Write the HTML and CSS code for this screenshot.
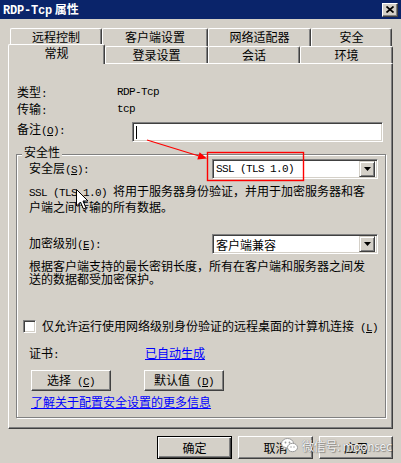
FILE: index.html
```html
<!DOCTYPE html>
<html lang="zh-CN">
<head>
    <meta charset="UTF-8">
    <title>RDP-Tcp 属性</title>
    <link rel="stylesheet" href="styles.css">
</head>
<body>
    <div class="window">
        <div class="titlebar">
            <span class="title"><span class="mono">RDP-Tcp</span> 属性</span>
            <button class="close-btn">
                <svg width="8" height="7" viewBox="0 0 8 7"><path d="M0.5 0.5 L7.5 6.5 M7.5 0.5 L0.5 6.5" stroke="#000" stroke-width="1.7"/></svg>
            </button>
        </div>

        <div class="tabs">
            <div class="tab-row back">
                <div class="tab" style="width:92px">远程控制</div>
                <div class="tab" style="width:106px">客户端设置</div>
                <div class="tab" style="width:103px">网络适配器</div>
                <div class="tab" style="width:81px">安全</div>
            </div>
            <div class="tab-row front">
                <div class="tab active" style="width:97px">常规</div>
                <div class="tab" style="width:103px">登录设置</div>
                <div class="tab" style="width:92px">会话</div>
                <div class="tab" style="width:93px">环境</div>
            </div>
        </div>

        <div class="panel">
            <div class="info-row">
                <span class="info-label">类型<span class="mono">:</span></span>
                <span class="mono">RDP-Tcp</span>
            </div>
            <div class="info-row">
                <span class="info-label">传输<span class="mono">:</span></span>
                <span class="mono">tcp</span>
            </div>
            <div class="note-row">
                <span class="note-label">备注<span class="mono">(<u>O</u>):</span></span>
                <div class="textbox"><span class="caret"></span></div>
            </div>

            <div class="group">
                <span class="legend">安全性</span>

                <div class="field-row">
                    <span class="field-label">安全层<span class="mono">(<u>S</u>):</span></span>
                    <div class="select">
                        <span class="mono">SSL (TLS 1.0)</span>
                        <span class="select-arrow">
                            <svg width="7" height="4" viewBox="0 0 7 4"><path d="M0 0 H7 L3.5 4 Z" fill="#000"/></svg>
                        </span>
                    </div>
                </div>
                <p class="desc"><span class="mono">SSL (TLS 1.0) </span>将用于服务器身份验证，并用于加密服务器和客<br>户端之间传输的所有数据。</p>

                <div class="field-row level-row">
                    <span class="field-label">加密级别<span class="mono">(<u>E</u>):</span></span>
                    <div class="select">
                        <span>客户端兼容</span>
                        <span class="select-arrow">
                            <svg width="7" height="4" viewBox="0 0 7 4"><path d="M0 0 H7 L3.5 4 Z" fill="#000"/></svg>
                        </span>
                    </div>
                </div>
                <p class="desc">根据客户端支持的最长密钥长度，所有在客户端和服务器之间发<br>送的数据都受加密保护。</p>

                <div class="check-row">
                    <span class="checkbox"></span>
                    <span>仅允许运行使用网络级别身份验证的远程桌面的计算机连接<span class="mono"> (<u>L</u>)</span></span>
                </div>

                <div class="cert-row">
                    <span class="cert-label">证书<span class="mono">:</span></span>
                    <a class="link" href="#">已自动生成</a>
                </div>

                <div class="btn-row">
                    <button class="btn">选择<span class="mono"> (<u>C</u>)</span></button>
                    <button class="btn">默认值<span class="mono"> (<u>D</u>)</span></button>
                </div>

                <a class="link more-link" href="#">了解关于配置安全设置的更多信息</a>
            </div>
        </div>

        <div class="footer">
            <button class="btn big default">确定</button>
            <button class="btn big">取消</button>
            <button class="btn big last">应用</button>
        </div>

        <svg class="annot" width="401" height="463" viewBox="0 0 401 463">
            <rect x="207.5" y="152.5" width="96" height="28" fill="none" stroke="#FF0000" stroke-width="1.4"/>
            <line x1="147" y1="140" x2="199" y2="156" stroke="#FF0000" stroke-width="1.2"/>
            <polygon points="207,158.6 197.3,159.4 199.6,152.2" fill="#FF0000"/>
        </svg>

        <svg class="cursor" width="13" height="21" viewBox="0 0 13 21">
            <path d="M0.5 0.5 V17 L4.5 13 L7.5 20 L10 19 L7 12 H12 Z" fill="#fff" stroke="#000" stroke-width="1"/>
        </svg>

        <div class="watermark">
            <svg width="17" height="15" viewBox="0 0 17 15">
                <ellipse cx="6.5" cy="5.5" rx="6" ry="5" fill="#fff" stroke="#9a9a9a"/>
                <path d="M3 9 L2 12 L6 10 Z" fill="#fff" stroke="#9a9a9a" stroke-width="0.8"/>
                <ellipse cx="11.5" cy="9.5" rx="5" ry="4.2" fill="#fff" stroke="#9a9a9a"/>
                <circle cx="4.5" cy="4.5" r="0.9" fill="#9a9a9a"/>
                <circle cx="8.5" cy="4.5" r="0.9" fill="#9a9a9a"/>
                <circle cx="10" cy="9" r="0.7" fill="#9a9a9a"/>
                <circle cx="13" cy="9" r="0.7" fill="#9a9a9a"/>
            </svg>
            <span>微信号: moonsec</span>
        </div>
    </div>
</body>
</html>
```

FILE: styles.css
```css
* {
    margin: 0;
    padding: 0;
    box-sizing: border-box;
}

body {
    width: 401px;
    height: 463px;
    overflow: hidden;
    background: #D4D0C8;
    font-family: "Noto Sans CJK SC", sans-serif;
    font-size: 12px;
    line-height: 13px;
    color: #000;
}

.window {
    position: relative;
    width: 401px;
    height: 463px;
}

.mono {
    font-family: "Liberation Mono", "Noto Sans CJK SC", monospace;
    font-size: 11px;
    letter-spacing: -0.6px;
}

/* title bar */
.titlebar {
    height: 19px;
    background: #0A246A;
    display: flex;
    align-items: center;
    justify-content: space-between;
    padding: 0 3px 0 3px;
}

.title {
    color: #fff;
    font-weight: bold;
}

.title .mono {
    font-size: 12px;
    letter-spacing: -0.2px;
}

.close-btn {
    width: 16px;
    height: 14px;
    background: #D4D0C8;
    border: 1px solid;
    border-color: #fff #404040 #404040 #fff;
    box-shadow: inset -1px -1px #808080;
    display: flex;
    align-items: center;
    justify-content: center;
}

/* tabs */
.tabs {
    padding-top: 9px;
}

.tab-row {
    display: flex;
}

.tab-row.back {
    padding-left: 10px;
    height: 18px;
}

.tab-row.front {
    padding-left: 8px;
    height: 17px;
}

.tab {
    height: 100%;
    background: #D4D0C8;
    border: 1px solid;
    border-color: #fff #404040 transparent #fff;
    border-bottom: none;
    border-radius: 2px 2px 0 0;
    box-shadow: inset -1px 0 #808080;
    text-align: center;
    line-height: 16px;
}

.tab.active {
    height: 20px;
    margin-top: -2px;
    position: relative;
    z-index: 1;
}

/* tab page */
.panel {
    margin-left: 8px;
    width: 385px;
    height: 366px;
    border: 1px solid;
    border-color: #fff #404040 #404040 #fff;
    box-shadow: inset -1px -1px #808080;
    padding-top: 20px;
}

.info-row {
    display: flex;
    align-items: center;
    height: 17px;
    padding-left: 8px;
}

.info-label {
    width: 100px;
}

.note-row {
    display: flex;
    align-items: flex-start;
    margin-top: 4px;
    padding-left: 8px;
}

.note-label {
    width: 115px;
}

.textbox {
    width: 251px;
    height: 20px;
    background: #fff;
    border: 1px solid;
    border-color: #808080 #fff #fff #808080;
    box-shadow: inset 1px 1px #404040, inset -1px -1px #D4D0C8;
    padding: 3px 0 0 3px;
}

.caret {
    display: block;
    width: 1px;
    height: 13px;
    background: #000;
}

/* security group */
.group {
    position: relative;
    margin: 12px 0 0 7px;
    width: 370px;
    height: 264px;
    border: 1px solid #808080;
    box-shadow: inset 1px 1px #fff, 1px 1px #fff;
}

.legend {
    position: absolute;
    left: 5px;
    top: -10px;
    padding: 0 2px;
    background: #D4D0C8;
}

.field-row {
    display: flex;
    align-items: center;
    height: 20px;
    margin-top: 4px;
    padding-left: 12px;
}

.level-row {
    margin-top: 21px;
}

.field-label {
    width: 183px;
}

.select {
    width: 166px;
    height: 20px;
    background: #fff;
    border: 1px solid;
    border-color: #808080 #fff #fff #808080;
    box-shadow: inset 1px 1px #404040, inset -1px -1px #D4D0C8;
    display: flex;
    align-items: center;
    justify-content: space-between;
    padding: 0 2px 0 3px;
}

.select-arrow {
    width: 16px;
    height: 16px;
    background: #D4D0C8;
    border: 1px solid;
    border-color: #D4D0C8 #404040 #404040 #D4D0C8;
    box-shadow: inset 1px 1px #fff, inset -1px -1px #808080;
    display: flex;
    align-items: center;
    justify-content: center;
}

.desc {
    margin-top: 5px;
    padding-left: 12px;
    white-space: nowrap;
}

.check-row {
    display: flex;
    align-items: center;
    height: 13px;
    margin-top: 35px;
    padding-left: 6px;
}

.checkbox {
    width: 13px;
    height: 13px;
    margin-right: 6px;
    background: #fff;
    border: 1px solid;
    border-color: #808080 #fff #fff #808080;
    box-shadow: inset 1px 1px #404040, inset -1px -1px #D4D0C8;
}

.cert-row {
    display: flex;
    height: 13px;
    margin-top: 13px;
    padding-left: 12px;
}

.cert-label {
    width: 116px;
}

.link {
    color: #0000FF;
    text-decoration: underline;
}

.btn-row {
    display: flex;
    gap: 33px;
    margin-top: 11px;
    padding-left: 14px;
}

.btn {
    width: 80px;
    height: 21px;
    background: #D4D0C8;
    border: 1px solid;
    border-color: #fff #404040 #404040 #fff;
    box-shadow: inset -1px -1px #808080;
    font-family: inherit;
    font-size: 12px;
    line-height: 13px;
    color: #000;
}

.more-link {
    display: block;
    margin-top: 4px;
    margin-left: 14px;
    width: max-content;
}

/* dialog buttons */
.footer {
    display: flex;
    justify-content: flex-end;
    gap: 6px;
    margin-top: 7px;
    padding-right: 8px;
}

.btn.big {
    width: 75px;
    height: 23px;
}

.btn.big.last {
    width: 74px;
}

.btn.default {
    border-color: #000;
    box-shadow: inset 1px 1px #fff, inset -1px -1px #404040, inset -2px -2px #808080;
}

/* overlays */
.annot {
    position: absolute;
    left: 0;
    top: 0;
    z-index: 5;
    pointer-events: none;
}

.cursor {
    position: absolute;
    left: 76px;
    top: 189px;
    z-index: 6;
}

.watermark {
    position: absolute;
    left: 281px;
    top: 438px;
    z-index: 6;
    display: flex;
    align-items: center;
    gap: 4px;
    white-space: nowrap;
    font-size: 12px;
    letter-spacing: -0.3px;
    color: rgba(255, 255, 255, 0.92);
    text-shadow: 0 0 1px #777, 1px 1px 1px rgba(0, 0, 0, 0.35);
}
```
